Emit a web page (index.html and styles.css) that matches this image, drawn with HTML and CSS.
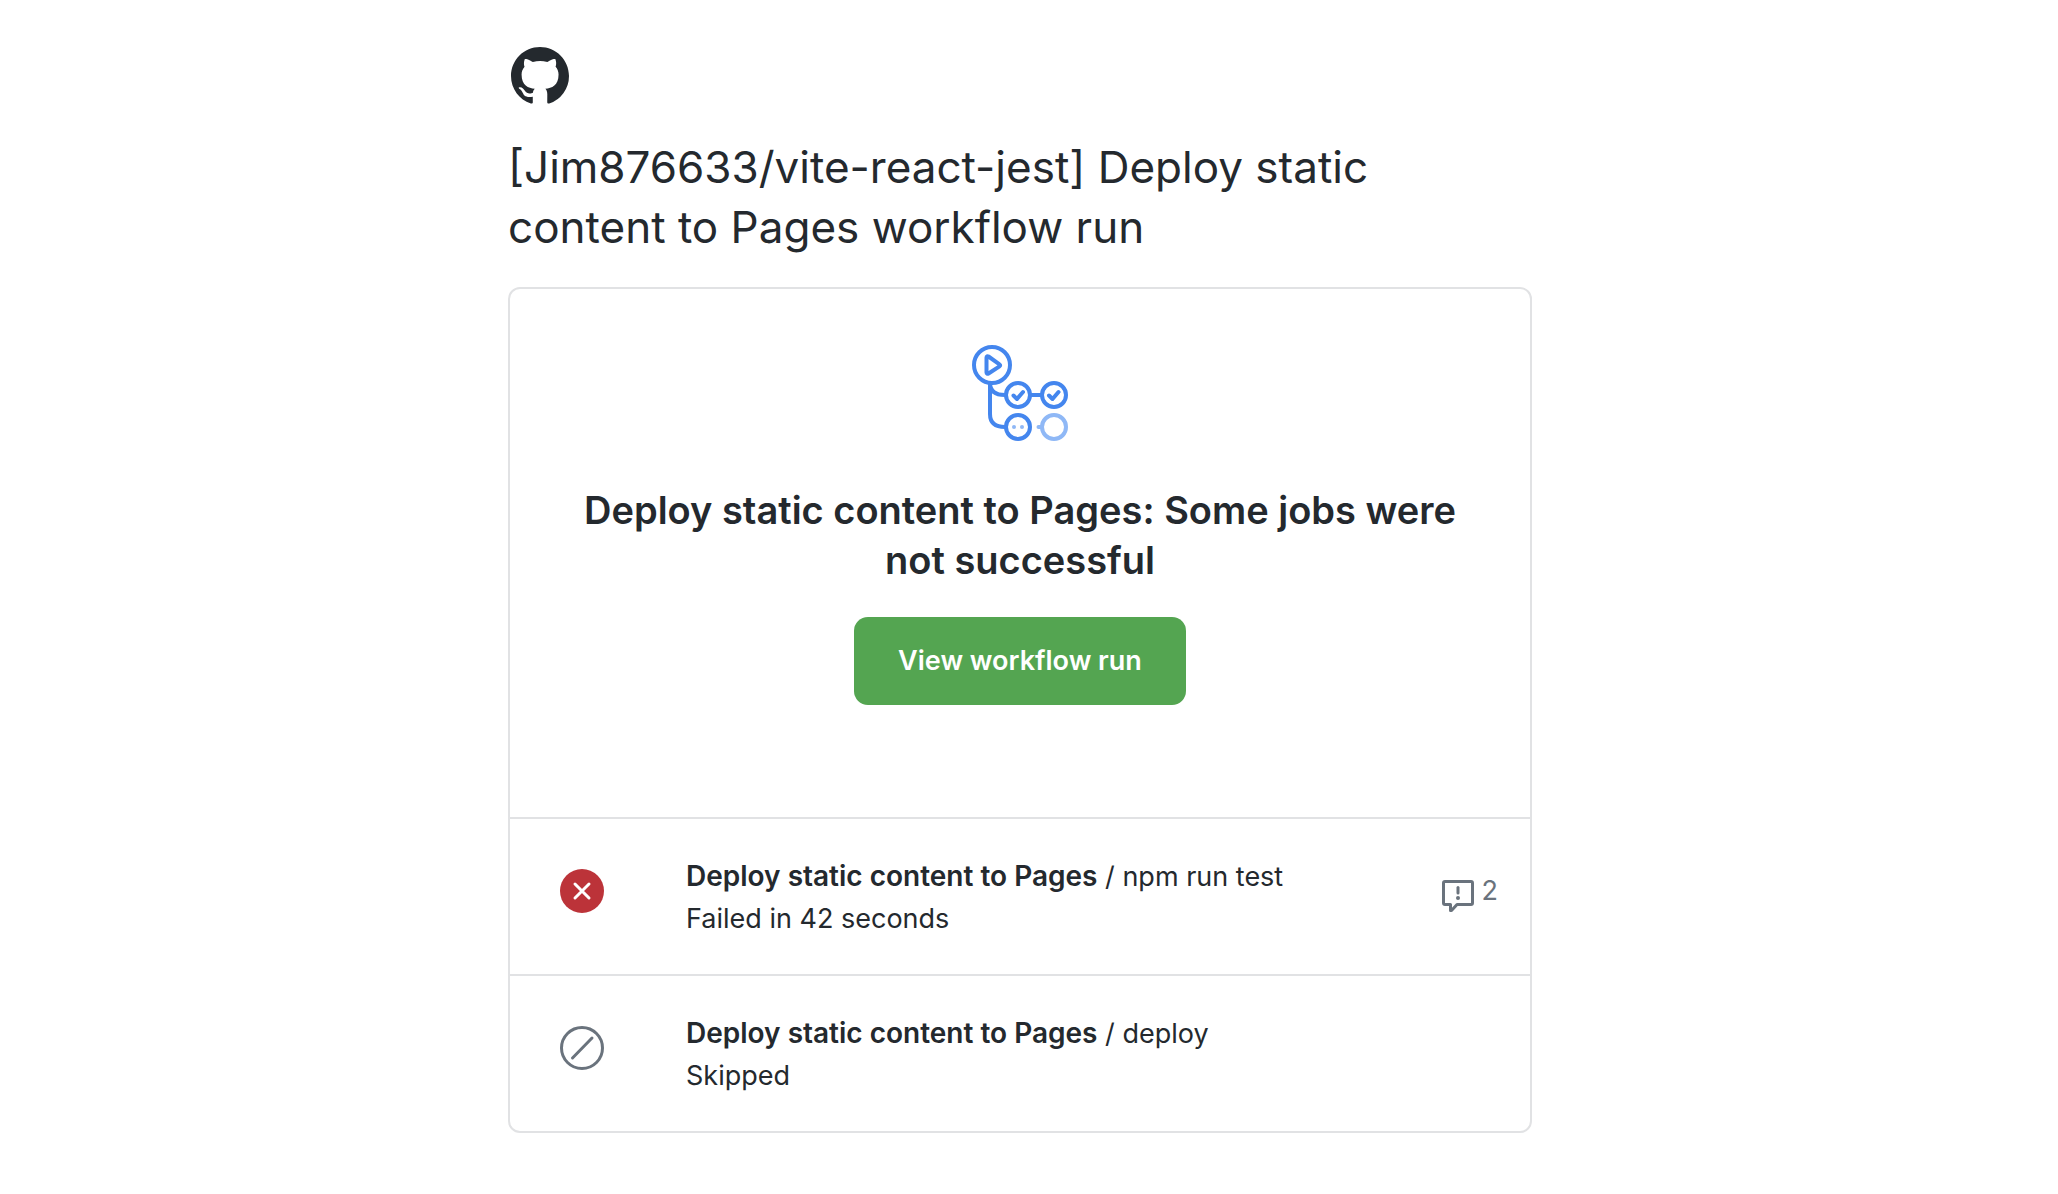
FILE: index.html
```html
<!DOCTYPE html>
<html lang="en">
<head>
<meta charset="utf-8">
<meta name="viewport" content="width=device-width, initial-scale=1">
<title>Deploy static content to Pages workflow run</title>
<link rel="stylesheet" href="styles.css">
</head>
<body>
<main class="mail">
  <svg class="logo" viewBox="0 0 16 16" role="img" aria-label="GitHub"><path d="M8 0C3.58 0 0 3.58 0 8c0 3.54 2.29 6.53 5.47 7.59.4.07.55-.17.55-.38 0-.19-.01-.82-.01-1.49-2.01.37-2.53-.49-2.69-.94-.09-.23-.48-.94-.82-1.13-.28-.15-.68-.52-.01-.53.63-.01 1.08.58 1.23.82.72 1.21 1.87.87 2.33.66.07-.52.28-.87.51-1.07-1.78-.2-3.64-.89-3.64-3.95 0-.87.31-1.59.82-2.15-.08-.2-.36-1.02.08-2.12 0 0 .67-.21 2.2.82.64-.18 1.32-.27 2-.27s1.36.09 2 .27c1.53-1.04 2.2-.82 2.2-.82.44 1.1.16 1.92.08 2.12.51.56.82 1.27.82 2.15 0 3.07-1.87 3.75-3.65 3.95.29.25.54.73.54 1.48 0 1.07-.01 1.93-.01 2.2 0 .21.15.46.55.38A8.01 8.01 0 0 0 16 8c0-4.42-3.58-8-8-8z"/></svg>
  <h1 class="title">[Jim876633/vite-react-jest] Deploy static content to Pages workflow run</h1>
  <section class="card">
    <div class="summary">
      <svg class="actions" viewBox="0 0 96 96" fill="none" stroke="#4486ee" stroke-width="4" stroke-linecap="round" stroke-linejoin="round" aria-hidden="true">
        <circle cx="20" cy="20" r="18"/>
        <path d="M14.500 12.500v15c0 1.200 1 1.600 2 1l11-7.200c.900-.600.900-1.400 0-2l-11-7.800c-1-.600-2-.200-2 1z"/>
        <path d="M18 38v31c0 9 5 13 15 13M18 38c0 8 5 12 15 12M58 50h12" stroke-linecap="butt"/>
        <circle cx="46" cy="50" r="12"/><circle cx="82" cy="50" r="12"/><circle cx="46" cy="82" r="12"/>
        <path d="m41.500 50.500 3.500 3.500 6-7M77 50.500l3.500 3.500 6-7"/>
        <g stroke="#8fb8f6"><circle cx="82" cy="82" r="12"/><path d="M66.500 82H69"/></g>
        <g fill="#8fb8f6" stroke="none"><circle cx="42" cy="82" r="2"/><circle cx="50" cy="82" r="2"/></g>
      </svg>
      <h2 class="headline">Deploy static content to Pages: Some jobs were not successful</h2>
      <a class="button" href="#run">View workflow run</a>
    </div>
    <ul class="jobs">
      <li class="job">
        <svg class="status" viewBox="0 0 44 44" role="img" aria-label="Failed"><circle cx="22" cy="22" r="22" fill="#bc3339"/><path d="m15 15 14 14M29 15 15 29" stroke="#fff" stroke-width="3" stroke-linecap="round"/></svg>
        <p class="text"><strong>Deploy static content to Pages</strong> / npm run test<br>Failed in 42 seconds</p>
        <span class="notes">
          <svg class="note-icon" viewBox="0 0 32 32" fill="none" stroke="#6a737d" stroke-width="3" stroke-linejoin="round" aria-hidden="true"><path d="M3 1.500h26q1.500 0 1.500 1.500v20q0 1.500-1.500 1.500H15l-5.500 6H8.500v-6H3q-1.500 0-1.500-1.500V3q0-1.500 1.500-1.500z"/><path d="M16 7.500v5.500" stroke-linecap="round"/><circle cx="16" cy="18" r="2" fill="#6a737d" stroke="none"/></svg>
          2
        </span>
      </li>
      <li class="job">
        <svg class="status" viewBox="0 0 44 44" fill="none" stroke="#6a737d" stroke-width="3" stroke-linecap="round" role="img" aria-label="Skipped"><circle cx="22" cy="22" r="20.500"/><path d="M12.500 32 32 12"/></svg>
        <p class="text"><strong>Deploy static content to Pages</strong> / deploy<br>Skipped</p>
      </li>
    </ul>
  </section>
</main>
</body>
</html>
```
FILE: styles.css
```css
* { box-sizing: border-box; }

body {
  margin: 0;
  padding: 47px 18px 62px 0;
  background: #fff;
  color: #24292e;
  font-family: Inter, "Liberation Sans", sans-serif;
  font-size: 27px;
  line-height: 42px;
}

.mail {
  max-width: 1024px;
  margin: 0 auto;
}

.logo {
  display: block;
  width: 58px;
  height: 58px;
  margin-left: 3px;
  fill: #24292e;
}

.title {
  margin: 32px 0 30px;
  font-size: 44px;
  font-weight: 400;
  line-height: 60px;
}

.card {
  border: 2px solid #e1e2e4;
  border-radius: 12px;
}

.summary {
  display: flex;
  flex-direction: column;
  align-items: center;
  padding: 56px 48px 112px;
}

.actions {
  width: 96px;
  height: 96px;
}

.headline {
  margin: 44px 0 32px;
  font-size: 38px;
  font-weight: 600;
  line-height: 50px;
  text-align: center;
}

.button {
  padding: 23px 44px;
  border-radius: 14px;
  background: #54a551;
  color: #fff;
  font-weight: 600;
  text-decoration: none;
}

.jobs {
  margin: 0;
  padding: 0;
  list-style: none;
}

.job {
  display: flex;
  align-items: flex-start;
  gap: 82px;
  padding: 36px 32px 34px 50px;
  border-top: 2px solid #e1e2e4;
}

.status {
  flex: none;
  width: 44px;
  height: 44px;
  margin-top: 14px;
}

.text {
  flex: 1;
  margin: 0;
}

.text strong {
  font-size: 28px;
  font-weight: 600;
}

.notes {
  display: flex;
  align-items: center;
  gap: 8px;
  margin-top: 15px;
  color: #6a737d;
}

.note-icon {
  width: 32px;
  height: 32px;
  margin-top: 10px;
}
```
